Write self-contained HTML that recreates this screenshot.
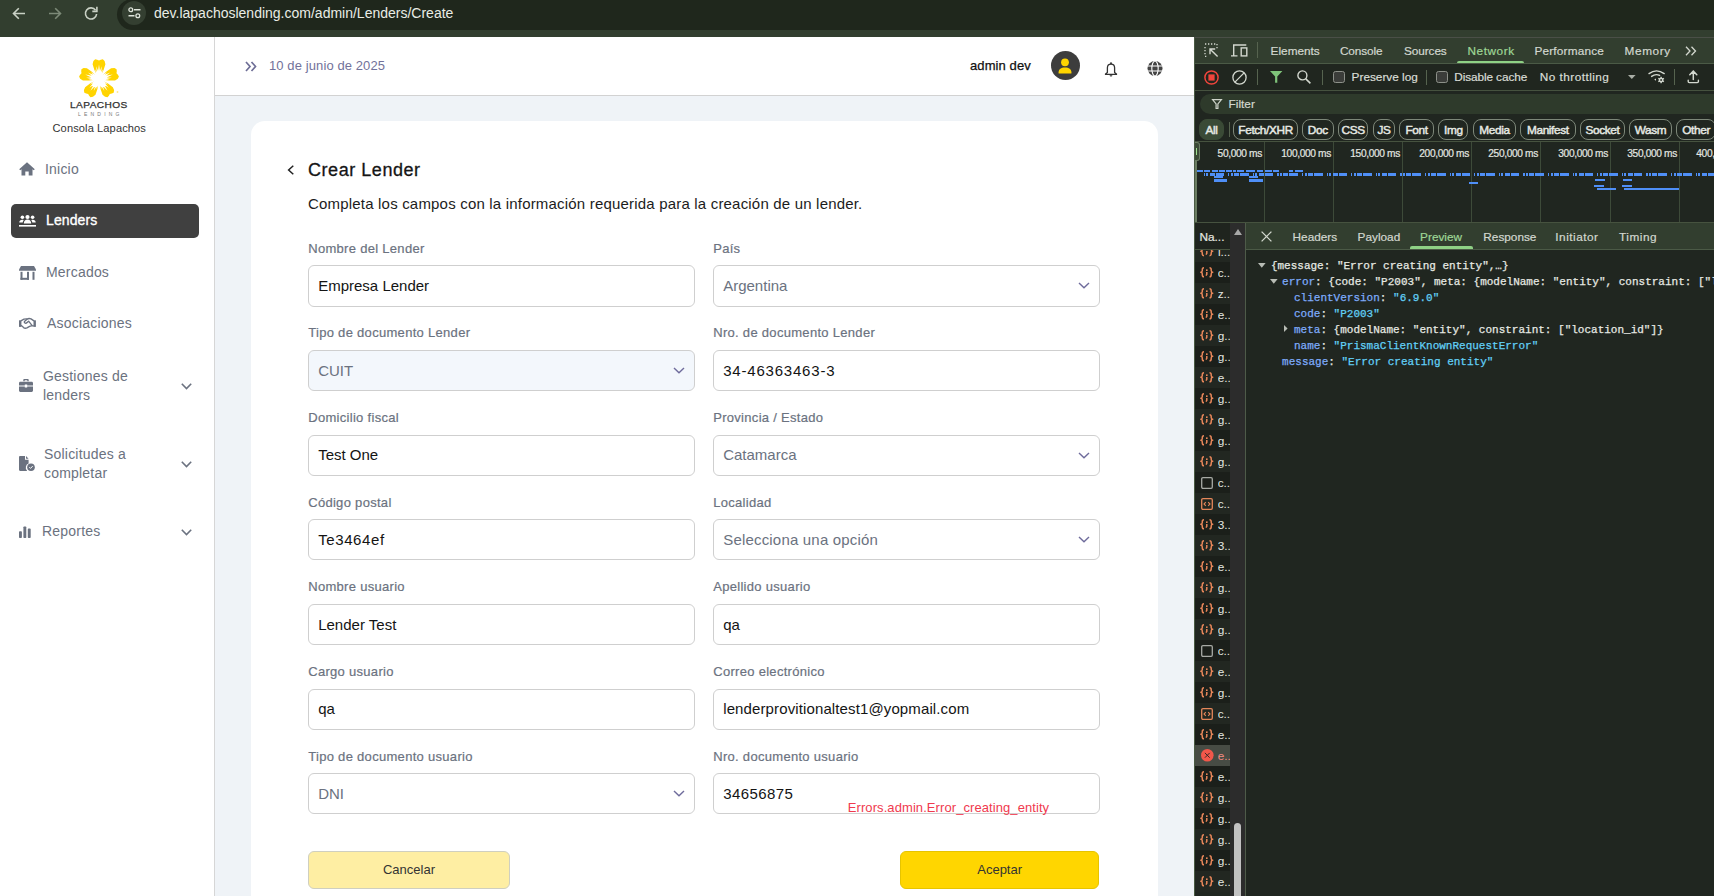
<!DOCTYPE html>
<html><head><meta charset="utf-8">
<style>
*{box-sizing:border-box;margin:0;padding:0}
html,body{width:1714px;height:896px;overflow:hidden;background:#fff;font-family:"Liberation Sans",sans-serif}
svg{position:absolute;overflow:visible}
.t{position:absolute;white-space:nowrap;line-height:1}
.abs{position:absolute}
.chip{position:absolute;height:21px;border:1px solid #7d8779;border-radius:8px;font-size:11.8px;color:#e6e9e3;-webkit-text-stroke:0.45px #e6e9e3;text-align:center;line-height:20px;letter-spacing:-0.35px}
#dev .t{-webkit-text-stroke:0.2px currentColor}
.tl{font-size:10.2px;color:#e3e6e0;letter-spacing:-0.35px}
.bar{position:absolute;background:#4f8ff7}
.mono{font-family:"Liberation Mono",monospace;font-size:11px;line-height:16px;-webkit-text-stroke:0.25px currentColor}
.mono span{-webkit-text-stroke:0.25px currentColor}
#chrome{position:absolute;left:0;top:0;width:1714px;height:37px;background:#323e2f}
#url{position:absolute;left:117px;top:-1px;width:1597px;height:31px;background:#1f271c;border-radius:16px 0 0 16px}
#page{position:absolute;left:0;top:37px;width:1194px;height:859px;background:#eff3f7;overflow:hidden}
#side{position:absolute;left:0;top:0;width:215px;height:859px;background:#fff;border-right:1px solid #d6d6d6}
#hdr{position:absolute;left:215px;top:0;width:979px;height:59px;background:#fff;border-bottom:1px solid #d2d2d2}
#card{position:absolute;left:251px;top:84px;width:907px;height:900px;background:#fff;border-radius:14px}
#dev{position:absolute;left:1194px;top:37px;width:520px;height:859px;background:#202620;overflow:hidden}
.nav{position:absolute;left:0;color:#6b7280;font-size:14px;letter-spacing:0.2px}
.lbl{position:absolute;font-size:13px;color:#6b7280;letter-spacing:0.3px;-webkit-text-stroke:0.2px #6b7280;white-space:nowrap;line-height:1}
.inp{position:absolute;width:387px;height:41.3px;border:1px solid #cfcfcf;border-radius:6px;background:#fff}
.inp span{position:absolute;left:9px;top:11.8px;font-size:15px;color:#141414;white-space:nowrap;line-height:1}
.inp.sel span{color:#6b7280}
.inp svg{right:0}
#form{position:absolute;left:0;top:0;width:1194px;height:896px}
.btn{position:absolute;border-radius:6px;font-size:13px;color:#333;text-align:center;line-height:35px}
</style></head><body>
<div id="chrome">
  <div id="url"></div>
  <!-- back -->
  <svg style="left:12px;top:7px" width="14" height="13" viewBox="0 0 14 13"><path d="M13 6.5H1.5M6.8 1.2L1.5 6.5l5.3 5.3" fill="none" stroke="#c9d1c5" stroke-width="1.6"/></svg>
  <svg style="left:48px;top:7px" width="14" height="13" viewBox="0 0 14 13"><path d="M1 6.5h11.5M7.2 1.2l5.3 5.3-5.3 5.3" fill="none" stroke="#7d8a78" stroke-width="1.6"/></svg>
  <svg style="left:84px;top:6px" width="14" height="14" viewBox="0 0 14 14"><path d="M11.6 4.2A5.6 5.6 0 1 0 12.6 8" fill="none" stroke="#c9d1c5" stroke-width="1.6"/><path d="M12.9 0.8v4.6H8.3" fill="none" stroke="#c9d1c5" stroke-width="1.6"/></svg>
  <div style="position:absolute;left:122px;top:1px;width:24px;height:24px;border-radius:12px;background:#343f31"></div>
  <svg style="left:128px;top:7px" width="13" height="12" viewBox="0 0 13 12"><circle cx="2.8" cy="2.8" r="1.9" fill="none" stroke="#dfe5dc" stroke-width="1.3"/><path d="M6 2.8h6.5M0.5 8.8H6.5" stroke="#dfe5dc" stroke-width="1.4"/><circle cx="9.8" cy="8.8" r="1.9" fill="none" stroke="#dfe5dc" stroke-width="1.3"/></svg>
  <div class="t" style="left:154px;top:6px;font-size:14px;color:#e9ede6">dev.lapachoslending.com/admin/Lenders/Create</div>
</div>
<div id="page">
  <div id="side">
    <!-- logo -->
    <svg style="left:78px;top:22.1px" width="42" height="40" viewBox="-21 -20 42 40">
      <g fill="#ffd400">
        <path d="M-6.4 -14.8L-5.6 -18L-3.8 -19.7L-1.8 -19.3L0 -18.4L1.8 -19.3L3.8 -19.7L5.6 -18L6.4 -14.8L4.6 -9L1.8 -3.5L-1.8 -3.5L-4.6 -9Z"/>
        <path d="M-6.4 -14.8L-5.6 -18L-3.8 -19.7L-1.8 -19.3L0 -18.4L1.8 -19.3L3.8 -19.7L5.6 -18L6.4 -14.8L4.6 -9L1.8 -3.5L-1.8 -3.5L-4.6 -9Z" transform="rotate(72)"/>
        <path d="M-6.4 -14.8L-5.6 -18L-3.8 -19.7L-1.8 -19.3L0 -18.4L1.8 -19.3L3.8 -19.7L5.6 -18L6.4 -14.8L4.6 -9L1.8 -3.5L-1.8 -3.5L-4.6 -9Z" transform="rotate(144)"/>
        <path d="M-6.4 -14.8L-5.6 -18L-3.8 -19.7L-1.8 -19.3L0 -18.4L1.8 -19.3L3.8 -19.7L5.6 -18L6.4 -14.8L4.6 -9L1.8 -3.5L-1.8 -3.5L-4.6 -9Z" transform="rotate(216)"/>
        <path d="M-6.4 -14.8L-5.6 -18L-3.8 -19.7L-1.8 -19.3L0 -18.4L1.8 -19.3L3.8 -19.7L5.6 -18L6.4 -14.8L4.6 -9L1.8 -3.5L-1.8 -3.5L-4.6 -9Z" transform="rotate(288)"/>
        
      </g>
      <circle r="6" fill="#fff"/>
      <path d="M1.50 -4.50L0.00 -14.50L-1.50 -4.50ZM0.24 -4.65L-2.70 -12.72L-2.11 -4.15ZM2.11 -4.15L2.70 -12.72L-0.24 -4.65ZM-0.76 -4.55L-3.93 -9.74L-2.61 -3.80ZM2.61 -3.80L3.93 -9.74L0.76 -4.55ZM4.74 0.04L13.79 -4.48L3.82 -2.82ZM4.50 -1.21L11.26 -6.50L3.30 -3.29ZM4.60 0.72L12.93 -1.36L4.35 -1.66ZM4.09 -2.13L8.04 -6.75L2.80 -3.66ZM4.42 1.31L10.47 0.73L4.56 -0.68ZM1.43 4.52L8.52 11.73L3.86 2.76ZM2.54 3.90L9.66 8.70L4.15 2.12ZM0.73 4.60L5.29 11.88L2.93 3.62ZM3.29 3.23L8.90 5.56L4.35 1.54ZM0.12 4.61L2.54 10.19L2.06 4.12ZM-3.86 2.76L-8.52 11.73L-1.43 4.52ZM-2.93 3.62L-5.29 11.88L-0.73 4.60ZM-4.15 2.12L-9.66 8.70L-2.54 3.90ZM-2.06 4.12L-2.54 10.19L-0.12 4.61ZM-4.35 1.54L-8.90 5.56L-3.29 3.23ZM-3.82 -2.82L-13.79 -4.48L-4.74 0.04ZM-4.35 -1.66L-12.93 -1.36L-4.60 0.72ZM-3.30 -3.29L-11.26 -6.50L-4.50 -1.21ZM-4.56 -0.68L-10.47 0.73L-4.42 1.31ZM-2.80 -3.66L-8.04 -6.75L-4.09 -2.13Z" fill="#fff"/>
      <circle cx="18.5" cy="13" r="0.9" fill="#ffe88a"/>
    </svg>
    <div class="t" style="left:69.6px;top:64px;font-size:8.3px;color:#333;-webkit-text-stroke:0.25px #333;letter-spacing:0.35px;transform:scaleX(1.22);transform-origin:0 0">LAPACHOS</div>
    <div class="t" style="left:78px;top:74.8px;font-size:5px;color:#777;letter-spacing:3.2px">LENDING</div>
    <div class="t" style="left:52.5px;top:86.3px;font-size:11.1px;color:#333;letter-spacing:0.1px">Consola Lapachos</div>

    <!-- Inicio -->
    <svg style="left:19px;top:125px" width="16" height="14" viewBox="0 0 16 14"><path d="M8 0.3L0.2 7.2 1.3 8.3 2.5 7.3V13.5H6.3V9.5H9.7V13.5H13.5V7.3L14.7 8.3 15.8 7.2Z" fill="#6b7280"/></svg>
    <div class="t nav" style="left:45px;top:125px">Inicio</div>
    <!-- Lenders active -->
    <div style="position:absolute;left:11px;top:167px;width:188px;height:34px;background:#404040;border-radius:5px"></div>
    <svg style="left:19px;top:177px" width="17" height="13" viewBox="0 0 17 13"><g fill="#fff"><circle cx="8.5" cy="3" r="2.1"/><circle cx="3.4" cy="3.2" r="1.8"/><circle cx="13.6" cy="3.2" r="1.8"/><path d="M4.8 9.5C4.8 6.8 6.5 5.6 8.5 5.6S12.2 6.8 12.2 9.5Z"/><path d="M0.3 8.6C0.3 6.6 1.6 5.8 3.2 5.8 3.8 5.8 4.3 5.9 4.7 6.2 4 7 3.7 7.8 3.7 8.6Z"/><path d="M16.7 8.6C16.7 6.6 15.4 5.8 13.8 5.8 13.2 5.8 12.7 5.9 12.3 6.2 13 7 13.3 7.8 13.3 8.6Z"/><rect x="0" y="11" width="17" height="1.6"/></g></svg>
    <div class="t nav" style="left:46px;top:175.8px;color:#fff;-webkit-text-stroke:0.35px #fff;letter-spacing:0.1px">Lenders</div>
    <!-- Mercados -->
    <svg style="left:19px;top:229px" width="17" height="14" viewBox="0 0 17 14"><g fill="#6b7280"><path d="M2 0H15L17 3.6V4.8H0V3.6Z"/><rect x="1.5" y="5.8" width="2" height="8"/><rect x="13.5" y="5.8" width="2" height="8"/><rect x="1.5" y="11.8" width="8.5" height="2"/><rect x="8" y="5.8" width="2" height="8"/></g></svg>
    <div class="t nav" style="left:46px;top:228.4px">Mercados</div>
    <!-- Asociaciones -->
    <svg style="left:19px;top:281px" width="17" height="11" viewBox="0 0 17 11"><g fill="#6b7280"><rect x="0" y="2.3" width="2.4" height="6.6"/><rect x="14.5" y="2.3" width="2.4" height="6.6"/></g><g fill="none" stroke="#6b7280" stroke-width="1.35" stroke-linejoin="round" stroke-linecap="round"><path d="M2.3 2.6L5 1.1 7.6 0.9"/><path d="M14.6 2.6L12 0.9C10.5 0.3 9 0.5 7.8 1.4L5.7 3.2C5 3.9 5.3 5 6.2 5.2 6.9 5.4 7.6 5.1 8.1 4.6L9.6 3.2 13 7.4"/><path d="M2.3 7.6L4.6 9.6C5.5 10.3 6.8 10.4 7.9 9.9L10.6 8.4 12.3 7.8H14.6"/></g></svg>
    <div class="t nav" style="left:47px;top:279.4px">Asociaciones</div>
    <!-- Gestiones -->
    <svg style="left:19px;top:342px" width="14" height="13" viewBox="0 0 14 13"><g fill="#6b7280"><path d="M4.3 2.2V1C4.3 0.4 4.8 0 5.3 0H8.7C9.2 0 9.7 0.4 9.7 1V2.2H8.3V1.3H5.7V2.2Z"/><path d="M1.3 2.7H12.7C13.4 2.7 14 3.3 14 4V6.5H8.2V5.6H5.8V6.5H0V4C0 3.3 0.6 2.7 1.3 2.7Z"/><path d="M0 7.4H5.8V8.4H8.2V7.4H14V11.6C14 12.4 13.4 13 12.7 13H1.3C0.6 13 0 12.4 0 11.6Z"/></g></svg>
    <div class="t nav" style="left:43px;top:329.8px;line-height:19px">Gestiones de<br>lenders</div>
    <svg style="left:181px;top:346px" width="11" height="7" viewBox="0 0 11 7"><path d="M0.8 0.8L5.5 5.5 10.2 0.8" fill="none" stroke="#6b7280" stroke-width="1.6"/></svg>
    <!-- Solicitudes -->
    <svg style="left:19px;top:419px" width="16" height="15" viewBox="0 0 16 15"><g fill="#6b7280"><path d="M0 1.2C0 0.5 0.5 0 1.2 0H6V3.8H9.6V7.6A4 4 0 0 0 7.9 14.2V15H1.2C0.5 15 0 14.5 0 13.8Z"/><path d="M7 0L9.6 2.8H7Z"/><circle cx="12" cy="11.2" r="3.8"/></g><path d="M10.3 11.2l1.2 1.2 2.2-2.3" fill="none" stroke="#fff" stroke-width="1"/></svg>
    <div class="t nav" style="left:44px;top:407.6px;line-height:19px">Solicitudes a<br>completar</div>
    <svg style="left:181px;top:424px" width="11" height="7" viewBox="0 0 11 7"><path d="M0.8 0.8L5.5 5.5 10.2 0.8" fill="none" stroke="#6b7280" stroke-width="1.6"/></svg>
    <!-- Reportes -->
    <svg style="left:19px;top:489px" width="12" height="12" viewBox="0 0 12 12"><g fill="#6b7280"><rect x="0" y="5.2" width="2.9" height="6.8" rx="0.8"/><rect x="4.4" y="0.4" width="2.9" height="11.6" rx="0.8"/><rect x="8.8" y="2.6" width="2.9" height="9.4" rx="0.8"/></g></svg>
    <div class="t nav" style="left:42px;top:487.3px">Reportes</div>
    <svg style="left:181px;top:492px" width="11" height="7" viewBox="0 0 11 7"><path d="M0.8 0.8L5.5 5.5 10.2 0.8" fill="none" stroke="#6b7280" stroke-width="1.6"/></svg>
  </div>

  <div id="hdr">
    <svg style="left:30px;top:24px" width="12" height="11" viewBox="0 0 12 11"><path d="M1 1L5 5.5 1 10M6.5 1L10.5 5.5 6.5 10" fill="none" stroke="#6e6e96" stroke-width="1.7"/></svg>
    <div class="t" style="left:54px;top:21.8px;font-size:13px;color:#72729a;letter-spacing:0.1px">10 de junio de 2025</div>
    <div class="t" style="left:755px;top:21.8px;font-size:13px;color:#111;-webkit-text-stroke:0.25px #111;letter-spacing:0.1px">admin dev</div>
    <div style="position:absolute;left:835.5px;top:14px;width:29px;height:29px;border-radius:15px;background:#3d3d3d"></div>
    <svg style="left:843px;top:21px" width="14" height="16" viewBox="0 0 14 16"><circle cx="7" cy="4.3" r="3.9" fill="#ffd500"/><path d="M0.6 14.2C0.6 11.2 3 9.5 7 9.5S13.4 11.2 13.4 14.2V15.5H0.6Z" fill="#ffd500"/></svg>
    <svg style="left:888.8px;top:24.5px" width="14" height="15" viewBox="0 0 14 15"><circle cx="7" cy="1.2" r="1" fill="#333"/><path d="M3.4 10.6V5.8C3.4 3.6 4.8 2.2 7 2.2S10.6 3.6 10.6 5.8V10.6L12.5 12V12.4H1.5V12Z" fill="none" stroke="#333" stroke-width="1.3" stroke-linejoin="round"/><path d="M5.6 13.2A1.4 1.2 0 0 0 8.4 13.2Z" fill="#333"/></svg>
    <svg style="left:932px;top:24px" width="16" height="15" viewBox="0 0 16 15"><g fill="#444"><circle cx="8" cy="7.5" r="7.5"/></g><g stroke="#fff" stroke-width="1.1" fill="none"><path d="M0 5H16M0 10H16"/><ellipse cx="8" cy="7.5" rx="3.2" ry="7.5"/></g></svg>
  </div>

  <div id="card"></div>
</div>
<div id="form">
  <svg style="left:287px;top:165px" width="8" height="10" viewBox="0 0 8 10"><path d="M6.3 0.7L1.6 5 6.3 9.3" fill="none" stroke="#222" stroke-width="1.5"/></svg>
  <div class="t" style="left:308px;top:161.1px;font-size:18px;color:#151515;-webkit-text-stroke:0.3px #151515;letter-spacing:0.55px">Crear Lender</div>
  <div class="t" style="left:308px;top:195.9px;font-size:15px;color:#1c1c1c;letter-spacing:0.19px">Completa los campos con la información requerida para la creación de un lender.</div>
  <div class="lbl" style="left:308.2px;top:241.8px">Nombre del Lender</div>
  <div class="inp" style="left:308.2px;top:265.3px"><span>Empresa Lender</span></div>
  <div class="lbl" style="left:713.2px;top:241.8px">País</div>
  <div class="inp sel" style="left:713.2px;top:265.3px"><span>Argentina</span><svg style="right:9.5px;top:16px" width="12" height="7" viewBox="0 0 12 7"><path d="M1 0.9L6 5.8 11 0.9" fill="none" stroke="#6f6c9c" stroke-width="1.4"/></svg></div>
  <div class="lbl" style="left:308.2px;top:326.4px">Tipo de documento Lender</div>
  <div class="inp sel" style="left:308.2px;top:349.9px;background:#f3f7fc"><span>CUIT</span><svg style="right:9.5px;top:16px" width="12" height="7" viewBox="0 0 12 7"><path d="M1 0.9L6 5.8 11 0.9" fill="none" stroke="#6f6c9c" stroke-width="1.4"/></svg></div>
  <div class="lbl" style="left:713.2px;top:326.4px">Nro. de documento Lender</div>
  <div class="inp" style="left:713.2px;top:349.9px"><span style="letter-spacing:0.8px">34-46363463-3</span></div>
  <div class="lbl" style="left:308.2px;top:411.1px">Domicilio fiscal</div>
  <div class="inp" style="left:308.2px;top:434.6px"><span>Test One</span></div>
  <div class="lbl" style="left:713.2px;top:411.1px">Provincia / Estado</div>
  <div class="inp sel" style="left:713.2px;top:434.6px"><span>Catamarca</span><svg style="right:9.5px;top:16px" width="12" height="7" viewBox="0 0 12 7"><path d="M1 0.9L6 5.8 11 0.9" fill="none" stroke="#6f6c9c" stroke-width="1.4"/></svg></div>
  <div class="lbl" style="left:308.2px;top:495.7px">Código postal</div>
  <div class="inp" style="left:308.2px;top:519.2px"><span style="letter-spacing:0.6px">Te3464ef</span></div>
  <div class="lbl" style="left:713.2px;top:495.7px">Localidad</div>
  <div class="inp sel" style="left:713.2px;top:519.2px"><span style="letter-spacing:0.19px">Selecciona una opción</span><svg style="right:9.5px;top:16px" width="12" height="7" viewBox="0 0 12 7"><path d="M1 0.9L6 5.8 11 0.9" fill="none" stroke="#6f6c9c" stroke-width="1.4"/></svg></div>
  <div class="lbl" style="left:308.2px;top:580.3px">Nombre usuario</div>
  <div class="inp" style="left:308.2px;top:603.8px"><span>Lender Test</span></div>
  <div class="lbl" style="left:713.2px;top:580.3px">Apellido usuario</div>
  <div class="inp" style="left:713.2px;top:603.8px"><span>qa</span></div>
  <div class="lbl" style="left:308.2px;top:665.0px">Cargo usuario</div>
  <div class="inp" style="left:308.2px;top:688.5px"><span>qa</span></div>
  <div class="lbl" style="left:713.2px;top:665.0px">Correo electrónico</div>
  <div class="inp" style="left:713.2px;top:688.5px"><span style="letter-spacing:0.12px">lenderprovitionaltest1@yopmail.com</span></div>
  <div class="lbl" style="left:308.2px;top:749.6px">Tipo de documento usuario</div>
  <div class="inp sel" style="left:308.2px;top:773.1px"><span>DNI</span><svg style="right:9.5px;top:16px" width="12" height="7" viewBox="0 0 12 7"><path d="M1 0.9L6 5.8 11 0.9" fill="none" stroke="#6f6c9c" stroke-width="1.4"/></svg></div>
  <div class="lbl" style="left:713.2px;top:749.6px">Nro. documento usuario</div>
  <div class="inp" style="left:713.2px;top:773.1px"><span style="letter-spacing:0.4px">34656875</span></div>
  <div class="t" style="left:847.8px;top:800.9px;font-size:13px;color:#f03a4e;letter-spacing:0.08px">Errors.admin.Error_creating_entity</div>
  <div class="btn" style="left:308.4px;top:851.3px;width:201.2px;height:37.3px;background:#feeea3;border:1px solid #cfcfc0">Cancelar</div>
  <div class="btn" style="left:899.8px;top:851.3px;width:199.7px;height:37.3px;background:#ffd600;border:1px solid #e6c400">Aceptar</div>
</div>
<div id="dev"><div class="abs" style="left:0.0px;top:0.0px;width:520px;height:1px;background:#4a4f47"></div>
<div class="abs" style="left:0.0px;top:1.0px;width:520px;height:26px;background:#323e2f;border-bottom:1px solid #4b5a46"></div>
<svg style="left:9.5px;top:5.5px" width="15" height="15" viewBox="0 0 15 15"><path d="M1 1h1.3M4 1h1.3M7 1h1.3M10 1h1.3M13 1v1.3M1 4v1.3M1 7v1.3M1 10v1.3M1 13.4h1.3M13 4v1.3" stroke="#d3d8cf" stroke-width="1.3"/><path d="M13.6 13.6L6.2 6.2M6 11.2V6H11.2" fill="none" stroke="#d3d8cf" stroke-width="1.4"/></svg>
<svg style="left:37.0px;top:7.0px" width="17" height="13" viewBox="0 0 17 13"><path d="M2.7 11.5V1H15.3M0 11.9H6.5" fill="none" stroke="#d3d8cf" stroke-width="1.4"/><rect x="10.2" y="3.9" width="5.6" height="8" fill="none" stroke="#d3d8cf" stroke-width="1.4"/></svg>
<div class="abs" style="left:63.0px;top:5.0px;width:1px;height:16px;background:#56634f"></div>
<div class="t" style="left:76.6px;top:9.0px;font-size:11.8px;color:#d3d8cf;letter-spacing:0px">Elements</div>
<div class="t" style="left:145.9px;top:9.0px;font-size:11.8px;color:#d3d8cf;letter-spacing:-0.1px">Console</div>
<div class="t" style="left:210.1px;top:9.0px;font-size:11.8px;color:#d3d8cf;letter-spacing:-0.1px">Sources</div>
<div class="t" style="left:273.5px;top:9.0px;font-size:11.8px;color:#9ed695;letter-spacing:0.55px">Network</div>
<div class="t" style="left:340.4px;top:9.0px;font-size:11.8px;color:#d3d8cf;letter-spacing:0.2px">Performance</div>
<div class="t" style="left:430.6px;top:9.0px;font-size:11.8px;color:#d3d8cf;letter-spacing:0.6px">Memory</div>
<div class="abs" style="left:263.2px;top:23.8px;width:66.7px;height:2.7px;background:#8fd185;border-radius:2px 2px 0 0"></div>
<svg style="left:491.0px;top:8.6px" width="12" height="10" viewBox="0 0 12 10"><path d="M1 0.8L5 5 1 9.2M6.5 0.8L10.5 5 6.5 9.2" fill="none" stroke="#d3d8cf" stroke-width="1.3"/></svg>
<div class="abs" style="left:0.0px;top:27.0px;width:520px;height:27px;background:#20261f;border-bottom:1px solid #46523f"></div>
<svg style="left:9.5px;top:32.5px" width="15" height="15" viewBox="0 0 15 15"><circle cx="7.5" cy="7.5" r="6.6" fill="none" stroke="#f0453c" stroke-width="1.5"/><rect x="4.4" y="4.4" width="6.2" height="6.2" fill="#f0453c"/></svg>
<svg style="left:37.5px;top:32.5px" width="15" height="15" viewBox="0 0 15 15"><circle cx="7.5" cy="7.5" r="6.6" fill="none" stroke="#d3d8cf" stroke-width="1.3"/><path d="M2.9 12.1L12.1 2.9" stroke="#d3d8cf" stroke-width="1.3"/></svg>
<div class="abs" style="left:63.0px;top:32.0px;width:1px;height:16px;background:#56634f"></div>
<svg style="left:75.8px;top:33.8px" width="13" height="12" viewBox="0 0 13 12"><path d="M0 0H12.4L7.3 5.6V11.8H5.1V5.6Z" fill="#7fc47a"/></svg>
<svg style="left:102.8px;top:33.2px" width="14" height="14" viewBox="0 0 14 14"><circle cx="5.4" cy="5.4" r="4.5" fill="none" stroke="#d3d8cf" stroke-width="1.4"/><path d="M8.6 8.6L13.4 13.4" stroke="#d3d8cf" stroke-width="1.5"/></svg>
<div class="abs" style="left:128.0px;top:32.5px;width:1px;height:15px;background:#56634f"></div>
<div class="abs" style="left:139.0px;top:34.3px;width:12px;height:12px;border:1.2px solid #8d918a;border-radius:2.5px;background:#3b3d3a"></div>
<div class="t" style="left:157.6px;top:34.8px;font-size:11.8px;color:#d9ddd6;letter-spacing:0px">Preserve log</div>
<div class="abs" style="left:231.5px;top:32.5px;width:1px;height:15px;background:#56634f"></div>
<div class="abs" style="left:242.2px;top:34.3px;width:12px;height:12px;border:1.2px solid #8d918a;border-radius:2.5px;background:#3b3d3a"></div>
<div class="t" style="left:260.3px;top:34.8px;font-size:11.8px;color:#d9ddd6;letter-spacing:-0.1px">Disable cache</div>
<div class="t" style="left:345.7px;top:34.8px;font-size:11.8px;color:#d9ddd6;letter-spacing:0.47px">No throttling</div>
<svg style="left:434.4px;top:38.1px" width="8" height="4" viewBox="0 0 8 4"><path d="M0 0H7.6L3.8 4Z" fill="#a9aea6"/></svg>
<svg style="left:453.5px;top:33.0px" width="18" height="14" viewBox="0 0 18 14"><g fill="none" stroke="#d3d8cf" stroke-width="1.4" stroke-linecap="round"><path d="M1 3.6Q8.5 -1.9 16.2 3.6"/><path d="M3.6 6.4Q7.6 3.4 11.6 5.4"/></g><path d="M6.2 9.6L8 8.5V10.7Z" fill="#d3d8cf"/><g transform="translate(13.1 10)" fill="#d3d8cf"><circle r="2.3"/><rect x="-0.75" y="-3.2" width="1.5" height="1.6" transform="rotate(0)"/><rect x="-0.75" y="-3.2" width="1.5" height="1.6" transform="rotate(60)"/><rect x="-0.75" y="-3.2" width="1.5" height="1.6" transform="rotate(120)"/><rect x="-0.75" y="-3.2" width="1.5" height="1.6" transform="rotate(180)"/><rect x="-0.75" y="-3.2" width="1.5" height="1.6" transform="rotate(240)"/><rect x="-0.75" y="-3.2" width="1.5" height="1.6" transform="rotate(300)"/></g><circle cx="13.1" cy="10" r="0.9" fill="#20261f"/></svg>
<div class="abs" style="left:480.2px;top:32.2px;width:1px;height:15.7px;background:#56634f"></div>
<svg style="left:492.5px;top:33.0px" width="13" height="14" viewBox="0 0 13 14"><g fill="none" stroke="#d3d8cf" stroke-width="1.5" stroke-linecap="round"><path d="M6.3 1.4V9.6M2.8 4.8L6.3 1.2 9.8 4.8"/><path d="M1.2 10.2V11.6C1.2 12.3 1.6 12.6 2.3 12.6H10.3C11 12.6 11.4 12.3 11.4 11.6V10.2" stroke-width="1.4"/></g></svg>
<div class="abs" style="left:6.0px;top:57.4px;width:540px;height:19.3px;background:#2e3a2b;border-radius:10px"></div>
<svg style="left:17.5px;top:62.4px" width="10" height="10" viewBox="0 0 10 10"><path d="M0.6 0.7H9.4L5.9 4.9V9.5H4.1V4.9Z" fill="none" stroke="#cfd4cb" stroke-width="1.2"/></svg>
<div class="t" style="left:34.6px;top:61.8px;font-size:11.8px;color:#d3d8cf;">Filter</div>
<div class="chip" style="left:5.3px;top:82.0px;width:24.3px;background:#3a4a36;border-color:#3a4a36">All</div>
<div class="chip" style="left:39.2px;top:82.0px;width:64.8px">Fetch/XHR</div>
<div class="chip" style="left:108.0px;top:82.0px;width:31.6px">Doc</div>
<div class="chip" style="left:143.9px;top:82.0px;width:30.6px">CSS</div>
<div class="chip" style="left:179.0px;top:82.0px;width:22.0px">JS</div>
<div class="chip" style="left:205.2px;top:82.0px;width:34.6px">Font</div>
<div class="chip" style="left:244.3px;top:82.0px;width:30.2px">Img</div>
<div class="chip" style="left:279.1px;top:82.0px;width:42.9px">Media</div>
<div class="chip" style="left:326.1px;top:82.0px;width:55.5px">Manifest</div>
<div class="chip" style="left:386.2px;top:82.0px;width:44.7px">Socket</div>
<div class="chip" style="left:435.0px;top:82.0px;width:42.9px">Wasm</div>
<div class="chip" style="left:482.2px;top:82.0px;width:39.8px">Other</div>
<div class="abs" style="left:34.6px;top:85.0px;width:1px;height:15px;background:#56634f"></div>
<div class="abs" style="left:1.0px;top:104.0px;width:520px;height:1px;background:#46523f"></div>
<div class="abs" style="left:70.0px;top:105.0px;width:1px;height:80px;background:#3d4a39"></div>
<div class="t tl" style="left:-10.0px;top:111.5px;width:78px;text-align:right">50,000 ms</div>
<div class="abs" style="left:139.0px;top:105.0px;width:1px;height:80px;background:#3d4a39"></div>
<div class="t tl" style="left:59.0px;top:111.5px;width:78px;text-align:right">100,000 ms</div>
<div class="abs" style="left:208.0px;top:105.0px;width:1px;height:80px;background:#3d4a39"></div>
<div class="t tl" style="left:128.0px;top:111.5px;width:78px;text-align:right">150,000 ms</div>
<div class="abs" style="left:277.0px;top:105.0px;width:1px;height:80px;background:#3d4a39"></div>
<div class="t tl" style="left:197.0px;top:111.5px;width:78px;text-align:right">200,000 ms</div>
<div class="abs" style="left:346.0px;top:105.0px;width:1px;height:80px;background:#3d4a39"></div>
<div class="t tl" style="left:266.0px;top:111.5px;width:78px;text-align:right">250,000 ms</div>
<div class="abs" style="left:416.0px;top:105.0px;width:1px;height:80px;background:#3d4a39"></div>
<div class="t tl" style="left:336.0px;top:111.5px;width:78px;text-align:right">300,000 ms</div>
<div class="abs" style="left:485.0px;top:105.0px;width:1px;height:80px;background:#3d4a39"></div>
<div class="t tl" style="left:405.0px;top:111.5px;width:78px;text-align:right">350,000 ms</div>
<div class="abs" style="left:554.0px;top:105.0px;width:1px;height:80px;background:#3d4a39"></div>
<div class="t tl" style="left:474.0px;top:111.5px;width:78px;text-align:right">400,000 ms</div>
<div class="abs" style="left:0.5px;top:105.0px;width:5.6px;height:18.8px;border:1px solid #6a7c62;border-left:none;border-radius:0 3px 3px 0;background:#3b4a36"></div>
<div class="abs" style="left:2.0px;top:111.0px;width:1.4px;height:7.2px;background:#9fe08f"></div>
<div class="abs" style="left:1.0px;top:123.5px;width:2px;height:62px;background:#6a7c62"></div>
<div class="abs" style="left:1.0px;top:185.0px;width:520px;height:1px;background:#46523f"></div>
<div class="bar" style="left:3.0px;top:133.2px;width:6.0px;height:2.2px"></div><div class="bar" style="left:10.0px;top:133.2px;width:6.0px;height:2.2px"></div><div class="bar" style="left:17.5px;top:133.2px;width:6.5px;height:2.2px"></div><div class="bar" style="left:25.0px;top:133.2px;width:6.0px;height:2.2px"></div><div class="bar" style="left:32.0px;top:133.2px;width:6.0px;height:2.2px"></div><div class="bar" style="left:39.0px;top:133.2px;width:3.0px;height:2.2px"></div><div class="bar" style="left:43.0px;top:133.2px;width:7.0px;height:2.2px"></div><div class="bar" style="left:52.0px;top:133.2px;width:9.0px;height:2.2px"></div><div class="bar" style="left:63.0px;top:133.2px;width:6.0px;height:2.2px"></div><div class="bar" style="left:70.5px;top:133.2px;width:7.5px;height:2.2px"></div><div class="bar" style="left:79.0px;top:133.2px;width:6.0px;height:2.2px"></div><div class="bar" style="left:95.0px;top:133.2px;width:4.0px;height:2.2px"></div><div class="bar" style="left:100.5px;top:133.2px;width:8.9px;height:2.2px"></div><div class="bar" style="left:9.6px;top:136.2px;width:1.2px;height:2.4px"></div><div class="bar" style="left:12.1px;top:136.2px;width:2.0px;height:2.4px"></div><div class="bar" style="left:15.6px;top:136.2px;width:5.0px;height:2.4px"></div><div class="bar" style="left:21.6px;top:136.2px;width:8.5px;height:2.4px"></div><div class="bar" style="left:34.2px;top:136.2px;width:1.2px;height:2.4px"></div><div class="bar" style="left:36.7px;top:136.2px;width:2.0px;height:2.4px"></div><div class="bar" style="left:40.2px;top:136.2px;width:5.0px;height:2.4px"></div><div class="bar" style="left:46.2px;top:136.2px;width:8.5px;height:2.4px"></div><div class="bar" style="left:58.8px;top:136.2px;width:1.2px;height:2.4px"></div><div class="bar" style="left:61.3px;top:136.2px;width:2.0px;height:2.4px"></div><div class="bar" style="left:64.8px;top:136.2px;width:5.0px;height:2.4px"></div><div class="bar" style="left:70.8px;top:136.2px;width:8.5px;height:2.4px"></div><div class="bar" style="left:83.4px;top:136.2px;width:1.2px;height:2.4px"></div><div class="bar" style="left:85.9px;top:136.2px;width:2.0px;height:2.4px"></div><div class="bar" style="left:89.4px;top:136.2px;width:5.0px;height:2.4px"></div><div class="bar" style="left:95.4px;top:136.2px;width:8.5px;height:2.4px"></div><div class="bar" style="left:108.0px;top:136.2px;width:1.2px;height:2.4px"></div><div class="bar" style="left:110.5px;top:136.2px;width:2.0px;height:2.4px"></div><div class="bar" style="left:114.0px;top:136.2px;width:5.0px;height:2.4px"></div><div class="bar" style="left:120.0px;top:136.2px;width:8.5px;height:2.4px"></div><div class="bar" style="left:132.6px;top:136.2px;width:1.2px;height:2.4px"></div><div class="bar" style="left:135.1px;top:136.2px;width:2.0px;height:2.4px"></div><div class="bar" style="left:138.6px;top:136.2px;width:5.0px;height:2.4px"></div><div class="bar" style="left:144.6px;top:136.2px;width:8.5px;height:2.4px"></div><div class="bar" style="left:157.2px;top:136.2px;width:1.2px;height:2.4px"></div><div class="bar" style="left:159.7px;top:136.2px;width:2.0px;height:2.4px"></div><div class="bar" style="left:163.2px;top:136.2px;width:5.0px;height:2.4px"></div><div class="bar" style="left:169.2px;top:136.2px;width:8.5px;height:2.4px"></div><div class="bar" style="left:181.8px;top:136.2px;width:1.2px;height:2.4px"></div><div class="bar" style="left:184.3px;top:136.2px;width:2.0px;height:2.4px"></div><div class="bar" style="left:187.8px;top:136.2px;width:5.0px;height:2.4px"></div><div class="bar" style="left:193.8px;top:136.2px;width:8.5px;height:2.4px"></div><div class="bar" style="left:206.4px;top:136.2px;width:1.2px;height:2.4px"></div><div class="bar" style="left:208.9px;top:136.2px;width:2.0px;height:2.4px"></div><div class="bar" style="left:212.4px;top:136.2px;width:5.0px;height:2.4px"></div><div class="bar" style="left:218.4px;top:136.2px;width:8.5px;height:2.4px"></div><div class="bar" style="left:231.0px;top:136.2px;width:1.2px;height:2.4px"></div><div class="bar" style="left:233.5px;top:136.2px;width:2.0px;height:2.4px"></div><div class="bar" style="left:237.0px;top:136.2px;width:5.0px;height:2.4px"></div><div class="bar" style="left:243.0px;top:136.2px;width:8.5px;height:2.4px"></div><div class="bar" style="left:255.6px;top:136.2px;width:1.2px;height:2.4px"></div><div class="bar" style="left:258.1px;top:136.2px;width:2.0px;height:2.4px"></div><div class="bar" style="left:261.6px;top:136.2px;width:5.0px;height:2.4px"></div><div class="bar" style="left:267.6px;top:136.2px;width:8.5px;height:2.4px"></div><div class="bar" style="left:280.2px;top:136.2px;width:1.2px;height:2.4px"></div><div class="bar" style="left:282.7px;top:136.2px;width:2.0px;height:2.4px"></div><div class="bar" style="left:286.2px;top:136.2px;width:5.0px;height:2.4px"></div><div class="bar" style="left:292.2px;top:136.2px;width:8.5px;height:2.4px"></div><div class="bar" style="left:304.8px;top:136.2px;width:1.2px;height:2.4px"></div><div class="bar" style="left:307.3px;top:136.2px;width:2.0px;height:2.4px"></div><div class="bar" style="left:310.8px;top:136.2px;width:5.0px;height:2.4px"></div><div class="bar" style="left:316.8px;top:136.2px;width:8.5px;height:2.4px"></div><div class="bar" style="left:329.4px;top:136.2px;width:1.2px;height:2.4px"></div><div class="bar" style="left:331.9px;top:136.2px;width:2.0px;height:2.4px"></div><div class="bar" style="left:335.4px;top:136.2px;width:5.0px;height:2.4px"></div><div class="bar" style="left:341.4px;top:136.2px;width:8.5px;height:2.4px"></div><div class="bar" style="left:354.0px;top:136.2px;width:1.2px;height:2.4px"></div><div class="bar" style="left:356.5px;top:136.2px;width:2.0px;height:2.4px"></div><div class="bar" style="left:360.0px;top:136.2px;width:5.0px;height:2.4px"></div><div class="bar" style="left:366.0px;top:136.2px;width:8.5px;height:2.4px"></div><div class="bar" style="left:378.6px;top:136.2px;width:1.2px;height:2.4px"></div><div class="bar" style="left:381.1px;top:136.2px;width:2.0px;height:2.4px"></div><div class="bar" style="left:384.6px;top:136.2px;width:5.0px;height:2.4px"></div><div class="bar" style="left:390.6px;top:136.2px;width:8.5px;height:2.4px"></div><div class="bar" style="left:403.2px;top:136.2px;width:1.2px;height:2.4px"></div><div class="bar" style="left:405.7px;top:136.2px;width:2.0px;height:2.4px"></div><div class="bar" style="left:409.2px;top:136.2px;width:5.0px;height:2.4px"></div><div class="bar" style="left:415.2px;top:136.2px;width:8.5px;height:2.4px"></div><div class="bar" style="left:427.8px;top:136.2px;width:1.2px;height:2.4px"></div><div class="bar" style="left:430.3px;top:136.2px;width:2.0px;height:2.4px"></div><div class="bar" style="left:433.8px;top:136.2px;width:5.0px;height:2.4px"></div><div class="bar" style="left:439.8px;top:136.2px;width:8.5px;height:2.4px"></div><div class="bar" style="left:452.4px;top:136.2px;width:1.2px;height:2.4px"></div><div class="bar" style="left:454.9px;top:136.2px;width:2.0px;height:2.4px"></div><div class="bar" style="left:458.4px;top:136.2px;width:5.0px;height:2.4px"></div><div class="bar" style="left:464.4px;top:136.2px;width:8.5px;height:2.4px"></div><div class="bar" style="left:477.0px;top:136.2px;width:1.2px;height:2.4px"></div><div class="bar" style="left:479.5px;top:136.2px;width:2.0px;height:2.4px"></div><div class="bar" style="left:483.0px;top:136.2px;width:5.0px;height:2.4px"></div><div class="bar" style="left:489.0px;top:136.2px;width:8.5px;height:2.4px"></div><div class="bar" style="left:501.6px;top:136.2px;width:1.2px;height:2.4px"></div><div class="bar" style="left:504.1px;top:136.2px;width:2.0px;height:2.4px"></div><div class="bar" style="left:507.6px;top:136.2px;width:5.0px;height:2.4px"></div><div class="bar" style="left:513.6px;top:136.2px;width:8.5px;height:2.4px"></div><div class="bar" style="left:20.0px;top:139.4px;width:9.3px;height:1.6px"></div><div class="bar" style="left:54.7px;top:139.4px;width:9.6px;height:1.6px"></div><div class="bar" style="left:20.0px;top:142.3px;width:12.8px;height:2.5px"></div><div class="bar" style="left:54.7px;top:142.3px;width:14.0px;height:2.5px"></div><div class="bar" style="left:274.7px;top:145.2px;width:9.2px;height:2.3px"></div><div class="bar" style="left:400.9px;top:142.2px;width:9.8px;height:2.2px"></div><div class="bar" style="left:429.0px;top:142.2px;width:9.0px;height:2.2px"></div><div class="bar" style="left:400.2px;top:148.2px;width:9.8px;height:1.8px"></div><div class="bar" style="left:428.0px;top:148.2px;width:10.0px;height:1.8px"></div><div class="bar" style="left:403.0px;top:151.3px;width:19.0px;height:2.2px"></div><div class="bar" style="left:429.7px;top:151.3px;width:55.6px;height:2.2px"></div>
<div class="abs" style="left:36.0px;top:186.0px;width:15px;height:673px;background:#2c2c2c"></div>
<svg style="left:39.5px;top:191.5px" width="8" height="6" viewBox="0 0 8 6"><path d="M0 6H8L4 0Z" fill="#a8a8a8"/></svg>
<div class="abs" style="left:39.8px;top:786.3px;width:7.6px;height:80px;background:#c2c2c2;border-radius:4px"></div>
<div class="abs" style="left:51.0px;top:186.0px;width:1px;height:673px;background:#4e5b49"></div>
<div class="abs" style="left:1.0px;top:212.0px;width:35px;height:13px;background:#222721;overflow:hidden"></div>
<div class="abs" style="left:1.0px;top:212.0px;width:35px;height:13px;overflow:hidden"><div style="position:absolute;left:0;top:-8px;width:35px;height:21px"><svg style="left:5.2px;top:5.3px" width="13.5" height="10.5" viewBox="0 0 13.5 10.5"><g fill="none" stroke="#e8875a" stroke-width="1.5" stroke-linejoin="round"><path d="M4 0.8C2.7 0.8 2.3 1.5 2.3 2.6V3.6C2.3 4.5 1.8 5.25 0.8 5.25 1.8 5.25 2.3 6 2.3 6.9V7.9C2.3 9 2.7 9.7 4 9.7"/><path d="M9.5 0.8C10.8 0.8 11.2 1.5 11.2 2.6V3.6C11.2 4.5 11.7 5.25 12.7 5.25 11.7 5.25 11.2 6 11.2 6.9V7.9C11.2 9 10.8 9.7 9.5 9.7"/></g><rect x="6" y="2.4" width="1.6" height="1.6" fill="#e8875a"/><path d="M6.8 5.1V7.4L6 8.7" stroke="#e8875a" stroke-width="1.5" fill="none"/></svg></div></div>
<div class="abs" style="left:24.0px;top:212.0px;width:12px;height:13px;overflow:hidden"><div class="t" style="left:0;top:-1.6px;font-size:11.8px;color:#e3e6e0;letter-spacing:-0.1px;-webkit-text-stroke:0">l...</div></div>
<div class="abs" style="left:1.0px;top:225.0px;width:35px;height:21px;background:#1b1f1a;overflow:hidden"></div>
<svg style="left:6.2px;top:230.3px" width="13.5" height="10.5" viewBox="0 0 13.5 10.5"><g fill="none" stroke="#e8875a" stroke-width="1.5" stroke-linejoin="round"><path d="M4 0.8C2.7 0.8 2.3 1.5 2.3 2.6V3.6C2.3 4.5 1.8 5.25 0.8 5.25 1.8 5.25 2.3 6 2.3 6.9V7.9C2.3 9 2.7 9.7 4 9.7"/><path d="M9.5 0.8C10.8 0.8 11.2 1.5 11.2 2.6V3.6C11.2 4.5 11.7 5.25 12.7 5.25 11.7 5.25 11.2 6 11.2 6.9V7.9C11.2 9 10.8 9.7 9.5 9.7"/></g><rect x="6" y="2.4" width="1.6" height="1.6" fill="#e8875a"/><path d="M6.8 5.1V7.4L6 8.7" stroke="#e8875a" stroke-width="1.5" fill="none"/></svg>
<div class="t" style="left:23.8px;top:231.4px;font-size:11.8px;color:#e3e6e0;letter-spacing:-0.1px;width:12.2px;overflow:hidden;-webkit-text-stroke:0">c..</div>
<div class="abs" style="left:1.0px;top:246.0px;width:35px;height:21px;background:#222721;overflow:hidden"></div>
<svg style="left:6.2px;top:251.3px" width="13.5" height="10.5" viewBox="0 0 13.5 10.5"><g fill="none" stroke="#e8875a" stroke-width="1.5" stroke-linejoin="round"><path d="M4 0.8C2.7 0.8 2.3 1.5 2.3 2.6V3.6C2.3 4.5 1.8 5.25 0.8 5.25 1.8 5.25 2.3 6 2.3 6.9V7.9C2.3 9 2.7 9.7 4 9.7"/><path d="M9.5 0.8C10.8 0.8 11.2 1.5 11.2 2.6V3.6C11.2 4.5 11.7 5.25 12.7 5.25 11.7 5.25 11.2 6 11.2 6.9V7.9C11.2 9 10.8 9.7 9.5 9.7"/></g><rect x="6" y="2.4" width="1.6" height="1.6" fill="#e8875a"/><path d="M6.8 5.1V7.4L6 8.7" stroke="#e8875a" stroke-width="1.5" fill="none"/></svg>
<div class="t" style="left:23.8px;top:252.4px;font-size:11.8px;color:#e3e6e0;letter-spacing:-0.1px;width:12.2px;overflow:hidden;-webkit-text-stroke:0">z..</div>
<div class="abs" style="left:1.0px;top:267.0px;width:35px;height:21px;background:#1b1f1a;overflow:hidden"></div>
<svg style="left:6.2px;top:272.3px" width="13.5" height="10.5" viewBox="0 0 13.5 10.5"><g fill="none" stroke="#e8875a" stroke-width="1.5" stroke-linejoin="round"><path d="M4 0.8C2.7 0.8 2.3 1.5 2.3 2.6V3.6C2.3 4.5 1.8 5.25 0.8 5.25 1.8 5.25 2.3 6 2.3 6.9V7.9C2.3 9 2.7 9.7 4 9.7"/><path d="M9.5 0.8C10.8 0.8 11.2 1.5 11.2 2.6V3.6C11.2 4.5 11.7 5.25 12.7 5.25 11.7 5.25 11.2 6 11.2 6.9V7.9C11.2 9 10.8 9.7 9.5 9.7"/></g><rect x="6" y="2.4" width="1.6" height="1.6" fill="#e8875a"/><path d="M6.8 5.1V7.4L6 8.7" stroke="#e8875a" stroke-width="1.5" fill="none"/></svg>
<div class="t" style="left:23.8px;top:273.4px;font-size:11.8px;color:#e3e6e0;letter-spacing:-0.1px;width:12.2px;overflow:hidden;-webkit-text-stroke:0">e..</div>
<div class="abs" style="left:1.0px;top:288.0px;width:35px;height:21px;background:#222721;overflow:hidden"></div>
<svg style="left:6.2px;top:293.3px" width="13.5" height="10.5" viewBox="0 0 13.5 10.5"><g fill="none" stroke="#e8875a" stroke-width="1.5" stroke-linejoin="round"><path d="M4 0.8C2.7 0.8 2.3 1.5 2.3 2.6V3.6C2.3 4.5 1.8 5.25 0.8 5.25 1.8 5.25 2.3 6 2.3 6.9V7.9C2.3 9 2.7 9.7 4 9.7"/><path d="M9.5 0.8C10.8 0.8 11.2 1.5 11.2 2.6V3.6C11.2 4.5 11.7 5.25 12.7 5.25 11.7 5.25 11.2 6 11.2 6.9V7.9C11.2 9 10.8 9.7 9.5 9.7"/></g><rect x="6" y="2.4" width="1.6" height="1.6" fill="#e8875a"/><path d="M6.8 5.1V7.4L6 8.7" stroke="#e8875a" stroke-width="1.5" fill="none"/></svg>
<div class="t" style="left:23.8px;top:294.4px;font-size:11.8px;color:#e3e6e0;letter-spacing:-0.1px;width:12.2px;overflow:hidden;-webkit-text-stroke:0">g..</div>
<div class="abs" style="left:1.0px;top:309.0px;width:35px;height:21px;background:#1b1f1a;overflow:hidden"></div>
<svg style="left:6.2px;top:314.3px" width="13.5" height="10.5" viewBox="0 0 13.5 10.5"><g fill="none" stroke="#e8875a" stroke-width="1.5" stroke-linejoin="round"><path d="M4 0.8C2.7 0.8 2.3 1.5 2.3 2.6V3.6C2.3 4.5 1.8 5.25 0.8 5.25 1.8 5.25 2.3 6 2.3 6.9V7.9C2.3 9 2.7 9.7 4 9.7"/><path d="M9.5 0.8C10.8 0.8 11.2 1.5 11.2 2.6V3.6C11.2 4.5 11.7 5.25 12.7 5.25 11.7 5.25 11.2 6 11.2 6.9V7.9C11.2 9 10.8 9.7 9.5 9.7"/></g><rect x="6" y="2.4" width="1.6" height="1.6" fill="#e8875a"/><path d="M6.8 5.1V7.4L6 8.7" stroke="#e8875a" stroke-width="1.5" fill="none"/></svg>
<div class="t" style="left:23.8px;top:315.4px;font-size:11.8px;color:#e3e6e0;letter-spacing:-0.1px;width:12.2px;overflow:hidden;-webkit-text-stroke:0">g..</div>
<div class="abs" style="left:1.0px;top:330.0px;width:35px;height:21px;background:#222721;overflow:hidden"></div>
<svg style="left:6.2px;top:335.3px" width="13.5" height="10.5" viewBox="0 0 13.5 10.5"><g fill="none" stroke="#e8875a" stroke-width="1.5" stroke-linejoin="round"><path d="M4 0.8C2.7 0.8 2.3 1.5 2.3 2.6V3.6C2.3 4.5 1.8 5.25 0.8 5.25 1.8 5.25 2.3 6 2.3 6.9V7.9C2.3 9 2.7 9.7 4 9.7"/><path d="M9.5 0.8C10.8 0.8 11.2 1.5 11.2 2.6V3.6C11.2 4.5 11.7 5.25 12.7 5.25 11.7 5.25 11.2 6 11.2 6.9V7.9C11.2 9 10.8 9.7 9.5 9.7"/></g><rect x="6" y="2.4" width="1.6" height="1.6" fill="#e8875a"/><path d="M6.8 5.1V7.4L6 8.7" stroke="#e8875a" stroke-width="1.5" fill="none"/></svg>
<div class="t" style="left:23.8px;top:336.4px;font-size:11.8px;color:#e3e6e0;letter-spacing:-0.1px;width:12.2px;overflow:hidden;-webkit-text-stroke:0">e..</div>
<div class="abs" style="left:1.0px;top:351.0px;width:35px;height:21px;background:#1b1f1a;overflow:hidden"></div>
<svg style="left:6.2px;top:356.3px" width="13.5" height="10.5" viewBox="0 0 13.5 10.5"><g fill="none" stroke="#e8875a" stroke-width="1.5" stroke-linejoin="round"><path d="M4 0.8C2.7 0.8 2.3 1.5 2.3 2.6V3.6C2.3 4.5 1.8 5.25 0.8 5.25 1.8 5.25 2.3 6 2.3 6.9V7.9C2.3 9 2.7 9.7 4 9.7"/><path d="M9.5 0.8C10.8 0.8 11.2 1.5 11.2 2.6V3.6C11.2 4.5 11.7 5.25 12.7 5.25 11.7 5.25 11.2 6 11.2 6.9V7.9C11.2 9 10.8 9.7 9.5 9.7"/></g><rect x="6" y="2.4" width="1.6" height="1.6" fill="#e8875a"/><path d="M6.8 5.1V7.4L6 8.7" stroke="#e8875a" stroke-width="1.5" fill="none"/></svg>
<div class="t" style="left:23.8px;top:357.4px;font-size:11.8px;color:#e3e6e0;letter-spacing:-0.1px;width:12.2px;overflow:hidden;-webkit-text-stroke:0">g..</div>
<div class="abs" style="left:1.0px;top:372.0px;width:35px;height:21px;background:#222721;overflow:hidden"></div>
<svg style="left:6.2px;top:377.3px" width="13.5" height="10.5" viewBox="0 0 13.5 10.5"><g fill="none" stroke="#e8875a" stroke-width="1.5" stroke-linejoin="round"><path d="M4 0.8C2.7 0.8 2.3 1.5 2.3 2.6V3.6C2.3 4.5 1.8 5.25 0.8 5.25 1.8 5.25 2.3 6 2.3 6.9V7.9C2.3 9 2.7 9.7 4 9.7"/><path d="M9.5 0.8C10.8 0.8 11.2 1.5 11.2 2.6V3.6C11.2 4.5 11.7 5.25 12.7 5.25 11.7 5.25 11.2 6 11.2 6.9V7.9C11.2 9 10.8 9.7 9.5 9.7"/></g><rect x="6" y="2.4" width="1.6" height="1.6" fill="#e8875a"/><path d="M6.8 5.1V7.4L6 8.7" stroke="#e8875a" stroke-width="1.5" fill="none"/></svg>
<div class="t" style="left:23.8px;top:378.4px;font-size:11.8px;color:#e3e6e0;letter-spacing:-0.1px;width:12.2px;overflow:hidden;-webkit-text-stroke:0">g..</div>
<div class="abs" style="left:1.0px;top:393.0px;width:35px;height:21px;background:#1b1f1a;overflow:hidden"></div>
<svg style="left:6.2px;top:398.3px" width="13.5" height="10.5" viewBox="0 0 13.5 10.5"><g fill="none" stroke="#e8875a" stroke-width="1.5" stroke-linejoin="round"><path d="M4 0.8C2.7 0.8 2.3 1.5 2.3 2.6V3.6C2.3 4.5 1.8 5.25 0.8 5.25 1.8 5.25 2.3 6 2.3 6.9V7.9C2.3 9 2.7 9.7 4 9.7"/><path d="M9.5 0.8C10.8 0.8 11.2 1.5 11.2 2.6V3.6C11.2 4.5 11.7 5.25 12.7 5.25 11.7 5.25 11.2 6 11.2 6.9V7.9C11.2 9 10.8 9.7 9.5 9.7"/></g><rect x="6" y="2.4" width="1.6" height="1.6" fill="#e8875a"/><path d="M6.8 5.1V7.4L6 8.7" stroke="#e8875a" stroke-width="1.5" fill="none"/></svg>
<div class="t" style="left:23.8px;top:399.4px;font-size:11.8px;color:#e3e6e0;letter-spacing:-0.1px;width:12.2px;overflow:hidden;-webkit-text-stroke:0">g..</div>
<div class="abs" style="left:1.0px;top:414.0px;width:35px;height:21px;background:#222721;overflow:hidden"></div>
<svg style="left:6.2px;top:419.3px" width="13.5" height="10.5" viewBox="0 0 13.5 10.5"><g fill="none" stroke="#e8875a" stroke-width="1.5" stroke-linejoin="round"><path d="M4 0.8C2.7 0.8 2.3 1.5 2.3 2.6V3.6C2.3 4.5 1.8 5.25 0.8 5.25 1.8 5.25 2.3 6 2.3 6.9V7.9C2.3 9 2.7 9.7 4 9.7"/><path d="M9.5 0.8C10.8 0.8 11.2 1.5 11.2 2.6V3.6C11.2 4.5 11.7 5.25 12.7 5.25 11.7 5.25 11.2 6 11.2 6.9V7.9C11.2 9 10.8 9.7 9.5 9.7"/></g><rect x="6" y="2.4" width="1.6" height="1.6" fill="#e8875a"/><path d="M6.8 5.1V7.4L6 8.7" stroke="#e8875a" stroke-width="1.5" fill="none"/></svg>
<div class="t" style="left:23.8px;top:420.4px;font-size:11.8px;color:#e3e6e0;letter-spacing:-0.1px;width:12.2px;overflow:hidden;-webkit-text-stroke:0">g..</div>
<div class="abs" style="left:1.0px;top:435.0px;width:35px;height:21px;background:#1b1f1a;overflow:hidden"></div>
<svg style="left:7.0px;top:439.5px" width="12" height="12" viewBox="0 0 12 12"><rect x="0.7" y="0.7" width="10.6" height="10.6" rx="1.2" fill="none" stroke="#a7aaa5" stroke-width="1.3"/></svg>
<div class="t" style="left:23.8px;top:441.4px;font-size:11.8px;color:#e3e6e0;letter-spacing:-0.1px;width:12.2px;overflow:hidden;-webkit-text-stroke:0">c..</div>
<div class="abs" style="left:1.0px;top:456.0px;width:35px;height:21px;background:#222721;overflow:hidden"></div>
<svg style="left:7.0px;top:460.5px" width="12" height="12" viewBox="0 0 12 12"><rect x="0.7" y="0.7" width="10.6" height="10.6" rx="1.2" fill="none" stroke="#e5875a" stroke-width="1.3"/><path d="M4.8 4.2L3 6 4.8 7.8M7.2 4.2L9 6 7.2 7.8" fill="none" stroke="#e5875a" stroke-width="1.1"/></svg>
<div class="t" style="left:23.8px;top:462.4px;font-size:11.8px;color:#e3e6e0;letter-spacing:-0.1px;width:12.2px;overflow:hidden;-webkit-text-stroke:0">c..</div>
<div class="abs" style="left:1.0px;top:477.0px;width:35px;height:21px;background:#1b1f1a;overflow:hidden"></div>
<svg style="left:6.2px;top:482.3px" width="13.5" height="10.5" viewBox="0 0 13.5 10.5"><g fill="none" stroke="#e8875a" stroke-width="1.5" stroke-linejoin="round"><path d="M4 0.8C2.7 0.8 2.3 1.5 2.3 2.6V3.6C2.3 4.5 1.8 5.25 0.8 5.25 1.8 5.25 2.3 6 2.3 6.9V7.9C2.3 9 2.7 9.7 4 9.7"/><path d="M9.5 0.8C10.8 0.8 11.2 1.5 11.2 2.6V3.6C11.2 4.5 11.7 5.25 12.7 5.25 11.7 5.25 11.2 6 11.2 6.9V7.9C11.2 9 10.8 9.7 9.5 9.7"/></g><rect x="6" y="2.4" width="1.6" height="1.6" fill="#e8875a"/><path d="M6.8 5.1V7.4L6 8.7" stroke="#e8875a" stroke-width="1.5" fill="none"/></svg>
<div class="t" style="left:23.8px;top:483.4px;font-size:11.8px;color:#e3e6e0;letter-spacing:-0.1px;width:12.2px;overflow:hidden;-webkit-text-stroke:0">3..</div>
<div class="abs" style="left:1.0px;top:498.0px;width:35px;height:21px;background:#222721;overflow:hidden"></div>
<svg style="left:6.2px;top:503.3px" width="13.5" height="10.5" viewBox="0 0 13.5 10.5"><g fill="none" stroke="#e8875a" stroke-width="1.5" stroke-linejoin="round"><path d="M4 0.8C2.7 0.8 2.3 1.5 2.3 2.6V3.6C2.3 4.5 1.8 5.25 0.8 5.25 1.8 5.25 2.3 6 2.3 6.9V7.9C2.3 9 2.7 9.7 4 9.7"/><path d="M9.5 0.8C10.8 0.8 11.2 1.5 11.2 2.6V3.6C11.2 4.5 11.7 5.25 12.7 5.25 11.7 5.25 11.2 6 11.2 6.9V7.9C11.2 9 10.8 9.7 9.5 9.7"/></g><rect x="6" y="2.4" width="1.6" height="1.6" fill="#e8875a"/><path d="M6.8 5.1V7.4L6 8.7" stroke="#e8875a" stroke-width="1.5" fill="none"/></svg>
<div class="t" style="left:23.8px;top:504.4px;font-size:11.8px;color:#e3e6e0;letter-spacing:-0.1px;width:12.2px;overflow:hidden;-webkit-text-stroke:0">3..</div>
<div class="abs" style="left:1.0px;top:519.0px;width:35px;height:21px;background:#1b1f1a;overflow:hidden"></div>
<svg style="left:6.2px;top:524.3px" width="13.5" height="10.5" viewBox="0 0 13.5 10.5"><g fill="none" stroke="#e8875a" stroke-width="1.5" stroke-linejoin="round"><path d="M4 0.8C2.7 0.8 2.3 1.5 2.3 2.6V3.6C2.3 4.5 1.8 5.25 0.8 5.25 1.8 5.25 2.3 6 2.3 6.9V7.9C2.3 9 2.7 9.7 4 9.7"/><path d="M9.5 0.8C10.8 0.8 11.2 1.5 11.2 2.6V3.6C11.2 4.5 11.7 5.25 12.7 5.25 11.7 5.25 11.2 6 11.2 6.9V7.9C11.2 9 10.8 9.7 9.5 9.7"/></g><rect x="6" y="2.4" width="1.6" height="1.6" fill="#e8875a"/><path d="M6.8 5.1V7.4L6 8.7" stroke="#e8875a" stroke-width="1.5" fill="none"/></svg>
<div class="t" style="left:23.8px;top:525.4px;font-size:11.8px;color:#e3e6e0;letter-spacing:-0.1px;width:12.2px;overflow:hidden;-webkit-text-stroke:0">e..</div>
<div class="abs" style="left:1.0px;top:540.0px;width:35px;height:21px;background:#222721;overflow:hidden"></div>
<svg style="left:6.2px;top:545.3px" width="13.5" height="10.5" viewBox="0 0 13.5 10.5"><g fill="none" stroke="#e8875a" stroke-width="1.5" stroke-linejoin="round"><path d="M4 0.8C2.7 0.8 2.3 1.5 2.3 2.6V3.6C2.3 4.5 1.8 5.25 0.8 5.25 1.8 5.25 2.3 6 2.3 6.9V7.9C2.3 9 2.7 9.7 4 9.7"/><path d="M9.5 0.8C10.8 0.8 11.2 1.5 11.2 2.6V3.6C11.2 4.5 11.7 5.25 12.7 5.25 11.7 5.25 11.2 6 11.2 6.9V7.9C11.2 9 10.8 9.7 9.5 9.7"/></g><rect x="6" y="2.4" width="1.6" height="1.6" fill="#e8875a"/><path d="M6.8 5.1V7.4L6 8.7" stroke="#e8875a" stroke-width="1.5" fill="none"/></svg>
<div class="t" style="left:23.8px;top:546.4px;font-size:11.8px;color:#e3e6e0;letter-spacing:-0.1px;width:12.2px;overflow:hidden;-webkit-text-stroke:0">g..</div>
<div class="abs" style="left:1.0px;top:561.0px;width:35px;height:21px;background:#1b1f1a;overflow:hidden"></div>
<svg style="left:6.2px;top:566.3px" width="13.5" height="10.5" viewBox="0 0 13.5 10.5"><g fill="none" stroke="#e8875a" stroke-width="1.5" stroke-linejoin="round"><path d="M4 0.8C2.7 0.8 2.3 1.5 2.3 2.6V3.6C2.3 4.5 1.8 5.25 0.8 5.25 1.8 5.25 2.3 6 2.3 6.9V7.9C2.3 9 2.7 9.7 4 9.7"/><path d="M9.5 0.8C10.8 0.8 11.2 1.5 11.2 2.6V3.6C11.2 4.5 11.7 5.25 12.7 5.25 11.7 5.25 11.2 6 11.2 6.9V7.9C11.2 9 10.8 9.7 9.5 9.7"/></g><rect x="6" y="2.4" width="1.6" height="1.6" fill="#e8875a"/><path d="M6.8 5.1V7.4L6 8.7" stroke="#e8875a" stroke-width="1.5" fill="none"/></svg>
<div class="t" style="left:23.8px;top:567.4px;font-size:11.8px;color:#e3e6e0;letter-spacing:-0.1px;width:12.2px;overflow:hidden;-webkit-text-stroke:0">g..</div>
<div class="abs" style="left:1.0px;top:582.0px;width:35px;height:21px;background:#222721;overflow:hidden"></div>
<svg style="left:6.2px;top:587.3px" width="13.5" height="10.5" viewBox="0 0 13.5 10.5"><g fill="none" stroke="#e8875a" stroke-width="1.5" stroke-linejoin="round"><path d="M4 0.8C2.7 0.8 2.3 1.5 2.3 2.6V3.6C2.3 4.5 1.8 5.25 0.8 5.25 1.8 5.25 2.3 6 2.3 6.9V7.9C2.3 9 2.7 9.7 4 9.7"/><path d="M9.5 0.8C10.8 0.8 11.2 1.5 11.2 2.6V3.6C11.2 4.5 11.7 5.25 12.7 5.25 11.7 5.25 11.2 6 11.2 6.9V7.9C11.2 9 10.8 9.7 9.5 9.7"/></g><rect x="6" y="2.4" width="1.6" height="1.6" fill="#e8875a"/><path d="M6.8 5.1V7.4L6 8.7" stroke="#e8875a" stroke-width="1.5" fill="none"/></svg>
<div class="t" style="left:23.8px;top:588.4px;font-size:11.8px;color:#e3e6e0;letter-spacing:-0.1px;width:12.2px;overflow:hidden;-webkit-text-stroke:0">g..</div>
<div class="abs" style="left:1.0px;top:603.0px;width:35px;height:21px;background:#1b1f1a;overflow:hidden"></div>
<svg style="left:7.0px;top:607.5px" width="12" height="12" viewBox="0 0 12 12"><rect x="0.7" y="0.7" width="10.6" height="10.6" rx="1.2" fill="none" stroke="#a7aaa5" stroke-width="1.3"/></svg>
<div class="t" style="left:23.8px;top:609.4px;font-size:11.8px;color:#e3e6e0;letter-spacing:-0.1px;width:12.2px;overflow:hidden;-webkit-text-stroke:0">c..</div>
<div class="abs" style="left:1.0px;top:624.0px;width:35px;height:21px;background:#222721;overflow:hidden"></div>
<svg style="left:6.2px;top:629.3px" width="13.5" height="10.5" viewBox="0 0 13.5 10.5"><g fill="none" stroke="#e8875a" stroke-width="1.5" stroke-linejoin="round"><path d="M4 0.8C2.7 0.8 2.3 1.5 2.3 2.6V3.6C2.3 4.5 1.8 5.25 0.8 5.25 1.8 5.25 2.3 6 2.3 6.9V7.9C2.3 9 2.7 9.7 4 9.7"/><path d="M9.5 0.8C10.8 0.8 11.2 1.5 11.2 2.6V3.6C11.2 4.5 11.7 5.25 12.7 5.25 11.7 5.25 11.2 6 11.2 6.9V7.9C11.2 9 10.8 9.7 9.5 9.7"/></g><rect x="6" y="2.4" width="1.6" height="1.6" fill="#e8875a"/><path d="M6.8 5.1V7.4L6 8.7" stroke="#e8875a" stroke-width="1.5" fill="none"/></svg>
<div class="t" style="left:23.8px;top:630.4px;font-size:11.8px;color:#e3e6e0;letter-spacing:-0.1px;width:12.2px;overflow:hidden;-webkit-text-stroke:0">e..</div>
<div class="abs" style="left:1.0px;top:645.0px;width:35px;height:21px;background:#1b1f1a;overflow:hidden"></div>
<svg style="left:6.2px;top:650.3px" width="13.5" height="10.5" viewBox="0 0 13.5 10.5"><g fill="none" stroke="#e8875a" stroke-width="1.5" stroke-linejoin="round"><path d="M4 0.8C2.7 0.8 2.3 1.5 2.3 2.6V3.6C2.3 4.5 1.8 5.25 0.8 5.25 1.8 5.25 2.3 6 2.3 6.9V7.9C2.3 9 2.7 9.7 4 9.7"/><path d="M9.5 0.8C10.8 0.8 11.2 1.5 11.2 2.6V3.6C11.2 4.5 11.7 5.25 12.7 5.25 11.7 5.25 11.2 6 11.2 6.9V7.9C11.2 9 10.8 9.7 9.5 9.7"/></g><rect x="6" y="2.4" width="1.6" height="1.6" fill="#e8875a"/><path d="M6.8 5.1V7.4L6 8.7" stroke="#e8875a" stroke-width="1.5" fill="none"/></svg>
<div class="t" style="left:23.8px;top:651.4px;font-size:11.8px;color:#e3e6e0;letter-spacing:-0.1px;width:12.2px;overflow:hidden;-webkit-text-stroke:0">g..</div>
<div class="abs" style="left:1.0px;top:666.0px;width:35px;height:21px;background:#222721;overflow:hidden"></div>
<svg style="left:7.0px;top:670.5px" width="12" height="12" viewBox="0 0 12 12"><rect x="0.7" y="0.7" width="10.6" height="10.6" rx="1.2" fill="none" stroke="#e5875a" stroke-width="1.3"/><path d="M4.8 4.2L3 6 4.8 7.8M7.2 4.2L9 6 7.2 7.8" fill="none" stroke="#e5875a" stroke-width="1.1"/></svg>
<div class="t" style="left:23.8px;top:672.4px;font-size:11.8px;color:#e3e6e0;letter-spacing:-0.1px;width:12.2px;overflow:hidden;-webkit-text-stroke:0">c..</div>
<div class="abs" style="left:1.0px;top:687.0px;width:35px;height:21px;background:#1b1f1a;overflow:hidden"></div>
<svg style="left:6.2px;top:692.3px" width="13.5" height="10.5" viewBox="0 0 13.5 10.5"><g fill="none" stroke="#e8875a" stroke-width="1.5" stroke-linejoin="round"><path d="M4 0.8C2.7 0.8 2.3 1.5 2.3 2.6V3.6C2.3 4.5 1.8 5.25 0.8 5.25 1.8 5.25 2.3 6 2.3 6.9V7.9C2.3 9 2.7 9.7 4 9.7"/><path d="M9.5 0.8C10.8 0.8 11.2 1.5 11.2 2.6V3.6C11.2 4.5 11.7 5.25 12.7 5.25 11.7 5.25 11.2 6 11.2 6.9V7.9C11.2 9 10.8 9.7 9.5 9.7"/></g><rect x="6" y="2.4" width="1.6" height="1.6" fill="#e8875a"/><path d="M6.8 5.1V7.4L6 8.7" stroke="#e8875a" stroke-width="1.5" fill="none"/></svg>
<div class="t" style="left:23.8px;top:693.4px;font-size:11.8px;color:#e3e6e0;letter-spacing:-0.1px;width:12.2px;overflow:hidden;-webkit-text-stroke:0">e..</div>
<div class="abs" style="left:1.0px;top:708.0px;width:35px;height:21px;background:#474c44;overflow:hidden"></div>
<svg style="left:6.8px;top:712.2px" width="13" height="13" viewBox="0 0 13 13"><circle cx="6.3" cy="6.3" r="6.3" fill="#f2574a"/><path d="M3.9 3.9L8.7 8.7M8.7 3.9L3.9 8.7" stroke="#3a2a28" stroke-width="1"/></svg>
<div class="t" style="left:23.8px;top:714.4px;font-size:11.8px;color:#f28b82;letter-spacing:-0.1px;width:12.2px;overflow:hidden;-webkit-text-stroke:0">e..</div>
<div class="abs" style="left:1.0px;top:729.0px;width:35px;height:21px;background:#1b1f1a;overflow:hidden"></div>
<svg style="left:6.2px;top:734.3px" width="13.5" height="10.5" viewBox="0 0 13.5 10.5"><g fill="none" stroke="#e8875a" stroke-width="1.5" stroke-linejoin="round"><path d="M4 0.8C2.7 0.8 2.3 1.5 2.3 2.6V3.6C2.3 4.5 1.8 5.25 0.8 5.25 1.8 5.25 2.3 6 2.3 6.9V7.9C2.3 9 2.7 9.7 4 9.7"/><path d="M9.5 0.8C10.8 0.8 11.2 1.5 11.2 2.6V3.6C11.2 4.5 11.7 5.25 12.7 5.25 11.7 5.25 11.2 6 11.2 6.9V7.9C11.2 9 10.8 9.7 9.5 9.7"/></g><rect x="6" y="2.4" width="1.6" height="1.6" fill="#e8875a"/><path d="M6.8 5.1V7.4L6 8.7" stroke="#e8875a" stroke-width="1.5" fill="none"/></svg>
<div class="t" style="left:23.8px;top:735.4px;font-size:11.8px;color:#e3e6e0;letter-spacing:-0.1px;width:12.2px;overflow:hidden;-webkit-text-stroke:0">e..</div>
<div class="abs" style="left:1.0px;top:750.0px;width:35px;height:21px;background:#222721;overflow:hidden"></div>
<svg style="left:6.2px;top:755.3px" width="13.5" height="10.5" viewBox="0 0 13.5 10.5"><g fill="none" stroke="#e8875a" stroke-width="1.5" stroke-linejoin="round"><path d="M4 0.8C2.7 0.8 2.3 1.5 2.3 2.6V3.6C2.3 4.5 1.8 5.25 0.8 5.25 1.8 5.25 2.3 6 2.3 6.9V7.9C2.3 9 2.7 9.7 4 9.7"/><path d="M9.5 0.8C10.8 0.8 11.2 1.5 11.2 2.6V3.6C11.2 4.5 11.7 5.25 12.7 5.25 11.7 5.25 11.2 6 11.2 6.9V7.9C11.2 9 10.8 9.7 9.5 9.7"/></g><rect x="6" y="2.4" width="1.6" height="1.6" fill="#e8875a"/><path d="M6.8 5.1V7.4L6 8.7" stroke="#e8875a" stroke-width="1.5" fill="none"/></svg>
<div class="t" style="left:23.8px;top:756.4px;font-size:11.8px;color:#e3e6e0;letter-spacing:-0.1px;width:12.2px;overflow:hidden;-webkit-text-stroke:0">g..</div>
<div class="abs" style="left:1.0px;top:771.0px;width:35px;height:21px;background:#1b1f1a;overflow:hidden"></div>
<svg style="left:6.2px;top:776.3px" width="13.5" height="10.5" viewBox="0 0 13.5 10.5"><g fill="none" stroke="#e8875a" stroke-width="1.5" stroke-linejoin="round"><path d="M4 0.8C2.7 0.8 2.3 1.5 2.3 2.6V3.6C2.3 4.5 1.8 5.25 0.8 5.25 1.8 5.25 2.3 6 2.3 6.9V7.9C2.3 9 2.7 9.7 4 9.7"/><path d="M9.5 0.8C10.8 0.8 11.2 1.5 11.2 2.6V3.6C11.2 4.5 11.7 5.25 12.7 5.25 11.7 5.25 11.2 6 11.2 6.9V7.9C11.2 9 10.8 9.7 9.5 9.7"/></g><rect x="6" y="2.4" width="1.6" height="1.6" fill="#e8875a"/><path d="M6.8 5.1V7.4L6 8.7" stroke="#e8875a" stroke-width="1.5" fill="none"/></svg>
<div class="t" style="left:23.8px;top:777.4px;font-size:11.8px;color:#e3e6e0;letter-spacing:-0.1px;width:12.2px;overflow:hidden;-webkit-text-stroke:0">g..</div>
<div class="abs" style="left:1.0px;top:792.0px;width:35px;height:21px;background:#222721;overflow:hidden"></div>
<svg style="left:6.2px;top:797.3px" width="13.5" height="10.5" viewBox="0 0 13.5 10.5"><g fill="none" stroke="#e8875a" stroke-width="1.5" stroke-linejoin="round"><path d="M4 0.8C2.7 0.8 2.3 1.5 2.3 2.6V3.6C2.3 4.5 1.8 5.25 0.8 5.25 1.8 5.25 2.3 6 2.3 6.9V7.9C2.3 9 2.7 9.7 4 9.7"/><path d="M9.5 0.8C10.8 0.8 11.2 1.5 11.2 2.6V3.6C11.2 4.5 11.7 5.25 12.7 5.25 11.7 5.25 11.2 6 11.2 6.9V7.9C11.2 9 10.8 9.7 9.5 9.7"/></g><rect x="6" y="2.4" width="1.6" height="1.6" fill="#e8875a"/><path d="M6.8 5.1V7.4L6 8.7" stroke="#e8875a" stroke-width="1.5" fill="none"/></svg>
<div class="t" style="left:23.8px;top:798.4px;font-size:11.8px;color:#e3e6e0;letter-spacing:-0.1px;width:12.2px;overflow:hidden;-webkit-text-stroke:0">g..</div>
<div class="abs" style="left:1.0px;top:813.0px;width:35px;height:21px;background:#1b1f1a;overflow:hidden"></div>
<svg style="left:6.2px;top:818.3px" width="13.5" height="10.5" viewBox="0 0 13.5 10.5"><g fill="none" stroke="#e8875a" stroke-width="1.5" stroke-linejoin="round"><path d="M4 0.8C2.7 0.8 2.3 1.5 2.3 2.6V3.6C2.3 4.5 1.8 5.25 0.8 5.25 1.8 5.25 2.3 6 2.3 6.9V7.9C2.3 9 2.7 9.7 4 9.7"/><path d="M9.5 0.8C10.8 0.8 11.2 1.5 11.2 2.6V3.6C11.2 4.5 11.7 5.25 12.7 5.25 11.7 5.25 11.2 6 11.2 6.9V7.9C11.2 9 10.8 9.7 9.5 9.7"/></g><rect x="6" y="2.4" width="1.6" height="1.6" fill="#e8875a"/><path d="M6.8 5.1V7.4L6 8.7" stroke="#e8875a" stroke-width="1.5" fill="none"/></svg>
<div class="t" style="left:23.8px;top:819.4px;font-size:11.8px;color:#e3e6e0;letter-spacing:-0.1px;width:12.2px;overflow:hidden;-webkit-text-stroke:0">g..</div>
<div class="abs" style="left:1.0px;top:834.0px;width:35px;height:21px;background:#222721;overflow:hidden"></div>
<svg style="left:6.2px;top:839.3px" width="13.5" height="10.5" viewBox="0 0 13.5 10.5"><g fill="none" stroke="#e8875a" stroke-width="1.5" stroke-linejoin="round"><path d="M4 0.8C2.7 0.8 2.3 1.5 2.3 2.6V3.6C2.3 4.5 1.8 5.25 0.8 5.25 1.8 5.25 2.3 6 2.3 6.9V7.9C2.3 9 2.7 9.7 4 9.7"/><path d="M9.5 0.8C10.8 0.8 11.2 1.5 11.2 2.6V3.6C11.2 4.5 11.7 5.25 12.7 5.25 11.7 5.25 11.2 6 11.2 6.9V7.9C11.2 9 10.8 9.7 9.5 9.7"/></g><rect x="6" y="2.4" width="1.6" height="1.6" fill="#e8875a"/><path d="M6.8 5.1V7.4L6 8.7" stroke="#e8875a" stroke-width="1.5" fill="none"/></svg>
<div class="t" style="left:23.8px;top:840.4px;font-size:11.8px;color:#e3e6e0;letter-spacing:-0.1px;width:12.2px;overflow:hidden;-webkit-text-stroke:0">e..</div>
<div class="abs" style="left:1.0px;top:186.0px;width:35px;height:27px;background:#1f241e;border-bottom:1px solid #46523f"></div>
<div class="t" style="left:5.5px;top:194.5px;font-size:11.8px;color:#e3e6e0;">Na...</div>
<div class="abs" style="left:52.0px;top:186.0px;width:470px;height:27px;background:#323e2f;border-bottom:1px solid #4b5a46"></div>
<svg style="left:66.8px;top:194.3px" width="11" height="11" viewBox="0 0 11 11"><path d="M0.6 0.6L10.4 10.4M10.4 0.6L0.6 10.4" stroke="#d3d8cf" stroke-width="1.3"/></svg>
<div class="t" style="left:98.6px;top:194.8px;font-size:11.8px;color:#d3d8cf;letter-spacing:0px">Headers</div>
<div class="t" style="left:163.6px;top:194.8px;font-size:11.8px;color:#d3d8cf;letter-spacing:0px">Payload</div>
<div class="t" style="left:226.1px;top:194.8px;font-size:11.8px;color:#9ed695;letter-spacing:0px">Preview</div>
<div class="t" style="left:289.3px;top:194.8px;font-size:11.8px;color:#d3d8cf;letter-spacing:0px">Response</div>
<div class="t" style="left:361.3px;top:194.8px;font-size:11.8px;color:#d3d8cf;letter-spacing:0.5px">Initiator</div>
<div class="t" style="left:424.9px;top:194.8px;font-size:11.8px;color:#d3d8cf;letter-spacing:0.55px">Timing</div>
<div class="abs" style="left:216.0px;top:209.4px;width:63px;height:2.8px;background:#8fd185;border-radius:2px 2px 0 0"></div>
<svg style="left:64.3px;top:226.3px" width="8" height="5" viewBox="0 0 8 5"><path d="M0 0H7.6L3.8 4.8Z" fill="#b8bcb5"/></svg>
<div class="t mono" style="left:76.9px;top:221.0px"><span style="color:#e6e9e3">{message: "Error creating entity",…}</span></div>
<svg style="left:75.5px;top:242.3px" width="8" height="5" viewBox="0 0 8 5"><path d="M0 0H7.6L3.8 4.8Z" fill="#b8bcb5"/></svg>
<div class="t mono" style="left:88.1px;top:237.0px"><span style="color:#7eabfa">error</span><span style="color:#e6e9e3">: {code: "P2003", meta: {modelName: "entity", constraint: ["location_id"]}}</span></div>
<div class="t mono" style="left:100.0px;top:253.0px"><span style="color:#7eabfa">clientVersion</span><span style="color:#e6e9e3">: </span><span style="color:#62d0f7">"6.9.0"</span></div>
<div class="t mono" style="left:100.0px;top:269.0px"><span style="color:#7eabfa">code</span><span style="color:#e6e9e3">: </span><span style="color:#62d0f7">"P2003"</span></div>
<svg style="left:90.2px;top:288.3px" width="4" height="7" viewBox="0 0 4 7"><path d="M0 0V7L3.6 3.5Z" fill="#b8bcb5"/></svg>
<div class="t mono" style="left:100.0px;top:285.0px"><span style="color:#7eabfa">meta</span><span style="color:#e6e9e3">: {modelName: "entity", constraint: ["location_id"]}</span></div>
<div class="t mono" style="left:100.0px;top:301.0px"><span style="color:#7eabfa">name</span><span style="color:#e6e9e3">: </span><span style="color:#62d0f7">"PrismaClientKnownRequestError"</span></div>
<div class="t mono" style="left:88.1px;top:317.0px"><span style="color:#7eabfa">message</span><span style="color:#e6e9e3">: </span><span style="color:#62d0f7">"Error creating entity"</span></div>
<div class="abs" style="left:0.0px;top:1.0px;width:1.2px;height:860px;background:#4a5a43"></div></div>
</body></html>
